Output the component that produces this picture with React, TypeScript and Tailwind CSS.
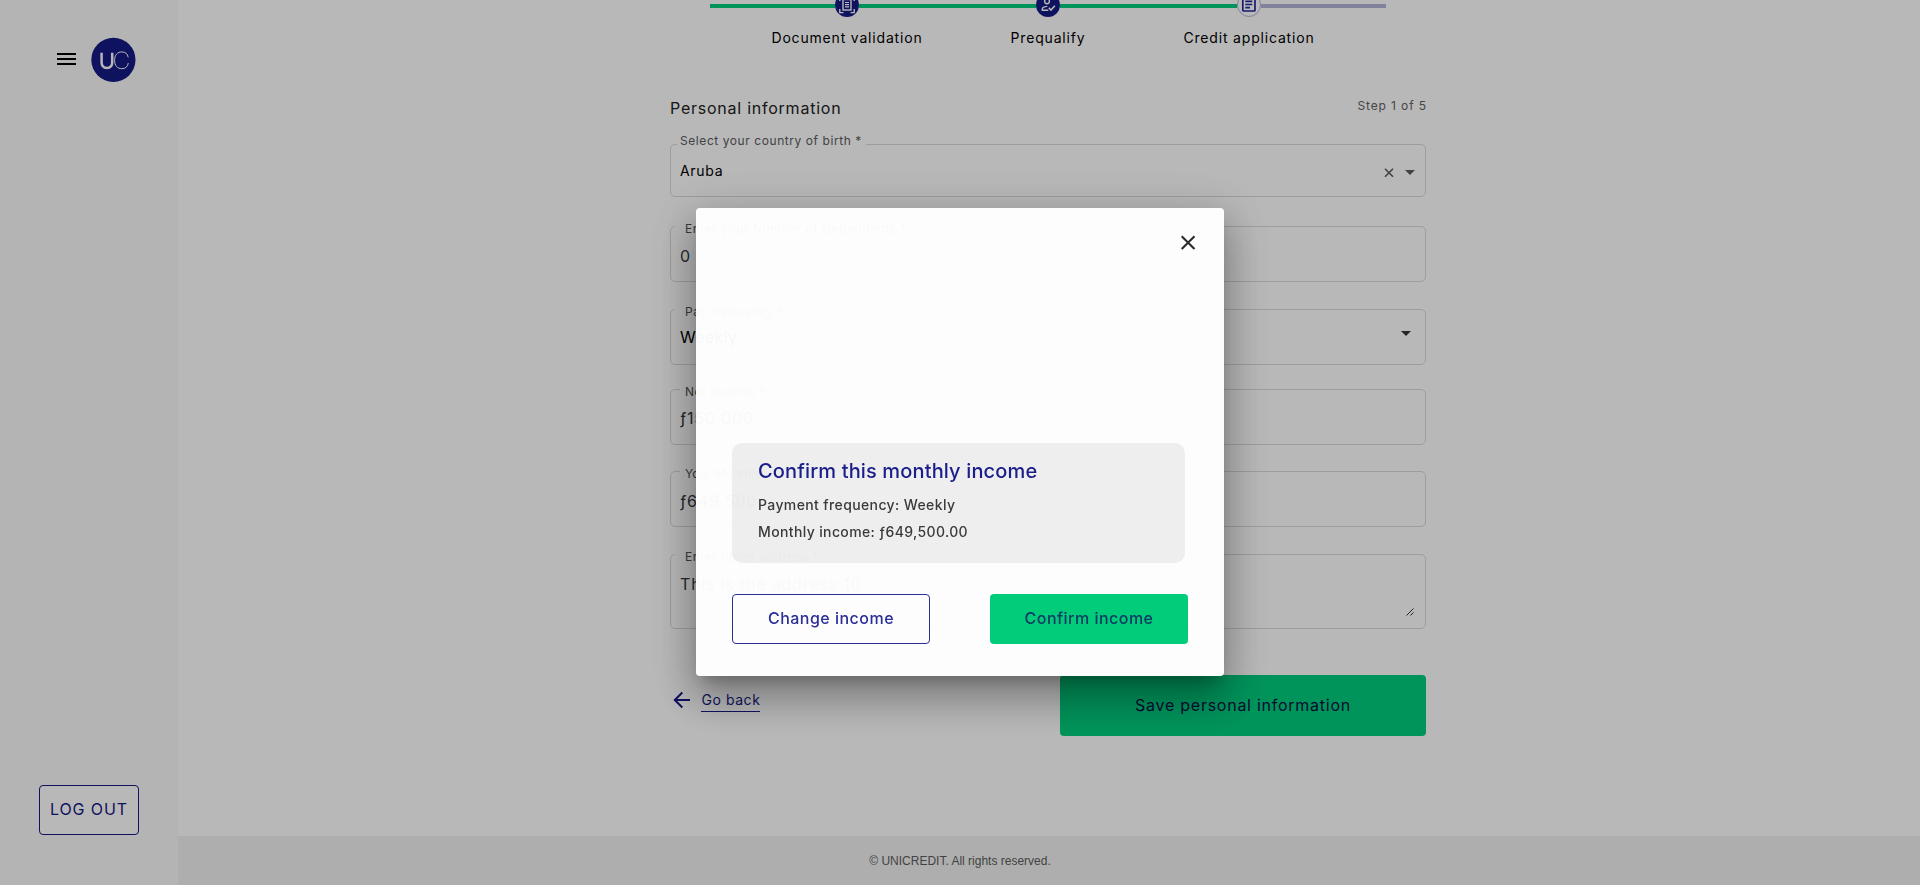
import React from "react";

type FieldProps = {
  label: string;
  labelClass: string;
  value: string;
  valueClass: string;
  className: string;
  children?: React.ReactNode;
};

function Field({ label, labelClass, value, valueClass, className, children }: FieldProps) {
  return (
    <div className={`relative rounded-[5px] border border-[#dadada] pl-[9px] ${className}`}>
      <span className={`absolute bg-white text-[12px] leading-[16px] whitespace-nowrap ${labelClass}`}>{label}</span>
      <div className={`leading-[20px] whitespace-nowrap ${valueClass}`}>{value}</div>
      {children}
    </div>
  );
}

function ScanIcon() {
  return (
    <svg width="24" height="24" viewBox="0 0 24 24" fill="none" stroke="#fff" strokeWidth="1.4">
      <rect x="8" y="6.5" width="8" height="10.5" />
      <path d="M10 9.5h4M10 11.7h4M10 13.9h4" strokeWidth="1.2" />
      <path d="M4.8 16v3.6h3.7M19.2 16v3.6h-3.7M4.8 8V4.4h3.7M19.2 8V4.4h-3.7" />
    </svg>
  );
}

function UserCheckIcon() {
  return (
    <svg width="24" height="24" viewBox="0 0 24 24" fill="none" stroke="#fff" strokeWidth="1.4">
      <circle cx="11" cy="8.3" r="2.4" />
      <path d="M12.3 17.3H6.3v-1.2c0-1.4 1.8-2.4 5-2.7" />
      <path d="M12.8 14.8l2.1 2.2 4-4.2" strokeWidth="1.6" />
    </svg>
  );
}

function ListIcon() {
  return (
    <svg width="22" height="22" viewBox="1 1 22 22" fill="none" stroke="#22279a" strokeWidth="1.7">
      <rect x="5.8" y="5" width="12.2" height="13" rx="0.8" />
      <path d="M8.3 8.3h7M8.3 11.5h7M8.3 14.7h4.7" />
    </svg>
  );
}

function Sidebar() {
  return (
    <aside className="flex h-full w-[178px] shrink-0 flex-col bg-[#fafafa]">
      <div className="flex items-start pt-[37px] pl-[57px]">
        <div className="mt-[16px] flex w-[19px] flex-col gap-[3px]">
          <div className="h-[2px] bg-black" />
          <div className="h-[2px] bg-black" />
          <div className="h-[2px] bg-black" />
        </div>
        <svg className="ml-[15px]" width="45" height="45" viewBox="0 0 45 45" fill="none">
          <circle cx="22.4" cy="22.8" r="22.1" fill="#151984" />
          <path d="M10.6 15.800v9.800c0 3.600 2 5.400 5.300 5.400s5.300-1.800 5.300-5.400V15.800" stroke="#fff" strokeWidth="2.5" />
          <path d="M37.200 20.300c-.6-3.600-3-5.400-6.300-5.400-4.600 0-7.300 3.200-7.300 8.400s2.700 8.400 7.300 8.400c3.500 0 5.900-2.100 6.400-5.700" stroke="#fff" strokeWidth="1" />
        </svg>
      </div>
      <button className="mt-auto mb-[50px] ml-[39px] h-[50px] w-[100px] rounded-[4px] border border-[#151984] bg-white pb-[2px] text-[16px] leading-[20px] tracking-[0.9px] text-[#151984]">
        LOG OUT
      </button>
    </aside>
  );
}

function Stepper() {
  return (
    <div className="-mt-[7px]">
      <div className="flex items-center justify-center">
        <div className="mt-[2px] h-[4px] w-[125px] bg-[#00cc7d]" />
        <div className="size-[24px] rounded-full bg-[#151984]"><ScanIcon /></div>
        <div className="mt-[2px] h-[4px] w-[177px] bg-[#00cc7d]" />
        <div className="size-[24px] rounded-full bg-[#151984]"><UserCheckIcon /></div>
        <div className="mt-[2px] h-[4px] w-[177px] bg-[#00cc7d]" />
        <div className="size-[24px] rounded-full border border-[#b3b3d9] bg-white"><ListIcon /></div>
        <div className="mt-[2px] h-[4px] w-[125px] bg-[#b3b3d9]" />
      </div>
      <div className="mt-[11px] flex justify-center text-center text-[14px] leading-[20px] tracking-[0.82px] text-black">
        <div className="w-[201px]">Document validation</div>
        <div className="w-[201px]">Prequalify</div>
        <div className="w-[201px]">Credit application</div>
      </div>
    </div>
  );
}

function IncomeDialog() {
  return (
    <div className="fixed inset-0 flex items-start justify-center bg-black/28">
      <div className="mt-[208px] h-[468px] w-[528px] rounded-[4px] bg-white/97 pt-[22px] shadow-[0_11px_15px_-7px_rgba(0,0,0,0.24),0_24px_38px_3px_rgba(0,0,0,0.2),0_9px_46px_8px_rgba(0,0,0,0.17)]">
        <div className="flex justify-end pr-[24px]">
          <svg width="24" height="24" viewBox="0 0 24 24" stroke="#2b2b2b" strokeWidth="2.1">
            <path d="M5.700 6.200l12.800 12.800M18.500 6.200L5.700 19" />
          </svg>
        </div>
        <div className="mt-[189px] ml-[36px] h-[120px] w-[453px] rounded-[10px] bg-black/6 pt-[16px] pl-[26px] font-medium text-[#3a3a3a]">
          <h2 className="text-[20px] leading-[24px] tracking-[0.14px] text-[#1a1e8a]">Confirm this monthly income</h2>
          <p className="mt-[12px] text-[14px] leading-[20px] tracking-[0.38px]">Payment frequency: Weekly</p>
          <p className="mt-[7px] text-[14px] leading-[20px] tracking-[0.37px]">Monthly income: ƒ649,500.00</p>
        </div>
        <div className="mt-[31px] flex justify-between px-[36px] text-[16px] leading-[20px] font-medium tracking-[0.48px]">
          <button className="h-[50px] w-[198px] rounded-[4px] border border-[#2a2e96] pb-[2px] text-[#2a2e96]">Change income</button>
          <button className="h-[50px] w-[198px] rounded-[4px] bg-[#00cc7a] pb-[2px] text-[#0f3a64]">Confirm income</button>
        </div>
      </div>
    </div>
  );
}

export default function App() {
  return (
    <div className="flex h-[885px] w-full overflow-hidden bg-white font-['Inter','Noto_Sans',sans-serif]">
      <Sidebar />
      <main className="flex grow flex-col">
        <div className="ml-[492px] flex w-[756px] flex-col">
          <Stepper />
          <div className="mt-[48px] flex justify-between">
            <h1 className="text-[16px] leading-[24px] tracking-[0.76px] text-[#222]">Personal information</h1>
            <span className="mt-[1px] -mr-[1px] text-[12px] leading-[18px] tracking-[0.89px] text-[#626262]">Step 1 of 5</span>
          </div>

          <Field
            className="mt-[24px] h-[53px] pt-[16px]"
            label="Select your country of birth *"
            labelClass="-top-[12px] left-[6px] pl-[3px] pr-[4px] tracking-[0.57px] text-[#5c5c5c]"
            value="Aruba"
            valueClass="text-[14px] tracking-[0.7px] text-black"
          >
            <svg className="absolute top-[22px] right-[10px]" width="32" height="12" viewBox="0 0 32 12">
              <path d="M2 1.700l8 8M10 1.700l-8 8" stroke="#5c5c5c" strokeWidth="1.600" />
              <path d="M22 3h10l-5 5z" fill="#5c5c5c" />
            </svg>
          </Field>
          <Field
            className="mt-[29px] h-[56px] pt-[19px]"
            label="Enter your Number of Dependents *"
            labelClass="-top-[6px] left-[4px] pl-[10px] pr-[4px] tracking-[0.56px] text-[#505050]"
            value="0"
            valueClass="text-[16px] text-[#32383c]"
          />
          <Field
            className="mt-[27px] h-[56px] pt-[17px]"
            label="Pay frequency *"
            labelClass="-top-[6px] left-[4px] pl-[10px] pr-[4px] tracking-[0.51px] text-[#505050]"
            value="Weekly"
            valueClass="text-[16px] tracking-[0.33px] text-black"
          >
            <svg className="absolute top-[21px] right-[14px]" width="10" height="5" viewBox="0 0 10 5">
              <path d="M0 0h10l-5 5z" fill="#33373a" />
            </svg>
          </Field>
          <Field
            className="mt-[24px] h-[56px] pt-[18px]"
            label="Net Income *"
            labelClass="-top-[6px] left-[9px] pl-[5px] pr-[4px] tracking-[0.54px] text-[#505050]"
            value="ƒ150 000"
            valueClass="text-[16px] tracking-[0.8px] text-[#32383c]"
          />
          <Field
            className="mt-[26px] h-[56px] pt-[19px]"
            label="Your Monthly"
            labelClass="-top-[6px] left-[9px] pl-[5px] pr-[4px] tracking-[0.1px] text-[#505050]"
            value="ƒ649 500"
            valueClass="text-[16px] tracking-[0.8px] text-[#32383c]"
          />
          <Field
            className="mt-[27px] h-[75px] pt-[19px]"
            label="Enter home address *"
            labelClass="-top-[6px] left-[4px] pl-[10px] pr-[4px] tracking-[0.56px] text-[#505050]"
            value="This is the address 10"
            valueClass="text-[16px] tracking-[0.81px] text-[#32383c]"
          >
            <svg className="absolute right-[11px] bottom-[12px]" width="8" height="8" viewBox="0 0 8 8">
              <path d="M0.500 7.500l7-7M4.500 7.500l3-3" stroke="#333" strokeWidth="1" />
            </svg>
          </Field>

          <div className="mt-[46px] flex justify-between">
            <a className="flex pt-[15px] pl-[3px]">
              <svg className="mt-[1px]" width="18" height="18" viewBox="0 0 18 18" fill="none" stroke="#151984" strokeWidth="2">
                <path d="M17 9H2.500M9.300 1.500L1.800 9l7.500 7.500" />
              </svg>
              <span className="ml-[10px] h-[22px] border-b border-[#151984] pl-[0.5px] text-[14px] leading-[20px] tracking-[0.55px] text-[#151984]">Go back</span>
            </a>
            <button className="h-[61px] w-[366px] rounded-[4px] bg-[#00cc7d] pb-[1px] text-[16px] leading-[20px] tracking-[0.74px] text-[#0a0f45]">
              Save personal information
            </button>
          </div>
        </div>
        <footer className="mt-auto flex h-[49px] items-center justify-center bg-[#f2f2f2] pr-[178px] font-['Liberation_Sans',Arial,sans-serif] text-[12px] text-[#5c5c5c]">
          © UNICREDIT. All rights reserved.
        </footer>
      </main>
      <IncomeDialog />
    </div>
  );
}
